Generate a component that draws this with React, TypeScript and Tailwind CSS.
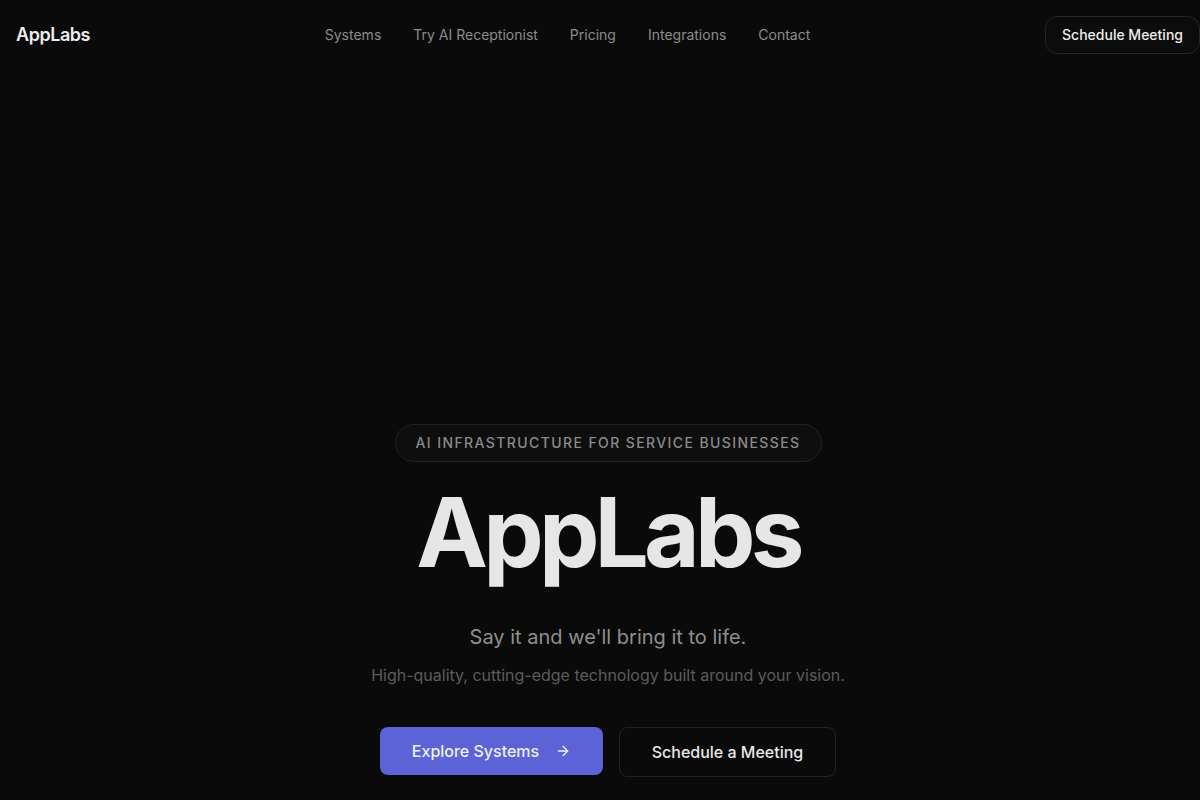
import { ArrowRight } from "lucide-react";

const navLinks = ["Systems", "Try AI Receptionist", "Pricing", "Integrations", "Contact"];

export default function App() {
  return (
    <div
      className="min-h-screen w-[1216px] bg-[#0a0a0a] text-[#e8e8e8] overflow-hidden"
      style={{ fontFamily: "Inter, 'Noto Sans', sans-serif" }}
    >
      {/* Top bar */}
      <header className="h-[69px] px-4 flex items-center justify-between">
        <a href="#" className="text-lg font-semibold tracking-tight text-[#ececec]">
          AppLabs
        </a>
        <nav className="flex items-center gap-8 text-sm text-[#8c8c8c]">
          {navLinks.map((link) => (
            <a key={link} href="#" className="hover:text-white transition-colors">
              {link}
            </a>
          ))}
        </nav>
        <button className="h-[38px] px-4 rounded-xl border border-[#262626] bg-[#0c0c0c] text-sm font-medium text-[#ececec]">
          Schedule Meeting
        </button>
      </header>

      {/* Hero */}
      <section className="pt-[355px] flex flex-col items-center text-center">
        <div className="h-[38px] px-5 flex items-center rounded-full border border-[#232323] bg-[#0e0e0e] text-sm font-medium tracking-[0.1em] text-[#8a8a8a]">
          AI INFRASTRUCTURE FOR SERVICE BUSINESSES
        </div>
        <h1 className="mt-[22px] text-[96px] leading-none font-bold tracking-[-0.05em] text-[#e6e6e6]">
          AppLabs
        </h1>
        <p className="mt-[43px] text-xl leading-7 text-[#8f8f8f]">Say it and we'll bring it to life.</p>
        <p className="mt-3 text-base leading-6 text-[#5c5c5c]">
          High-quality, cutting-edge technology built around your vision.
        </p>
        <div className="mt-10 flex items-start gap-4">
          <button className="h-12 w-[223px] rounded-lg bg-[#5b63d6] flex items-center justify-center gap-4 text-base font-medium text-[#eef0ff]">
            Explore Systems
            <ArrowRight className="w-4 h-4" strokeWidth={2} />
          </button>
          <button className="h-[50px] w-[217px] rounded-lg border border-[#232323] bg-[#0a0a0a] text-base font-medium text-[#e8e8e8]">
            Schedule a Meeting
          </button>
        </div>
      </section>
    </div>
  );
}
